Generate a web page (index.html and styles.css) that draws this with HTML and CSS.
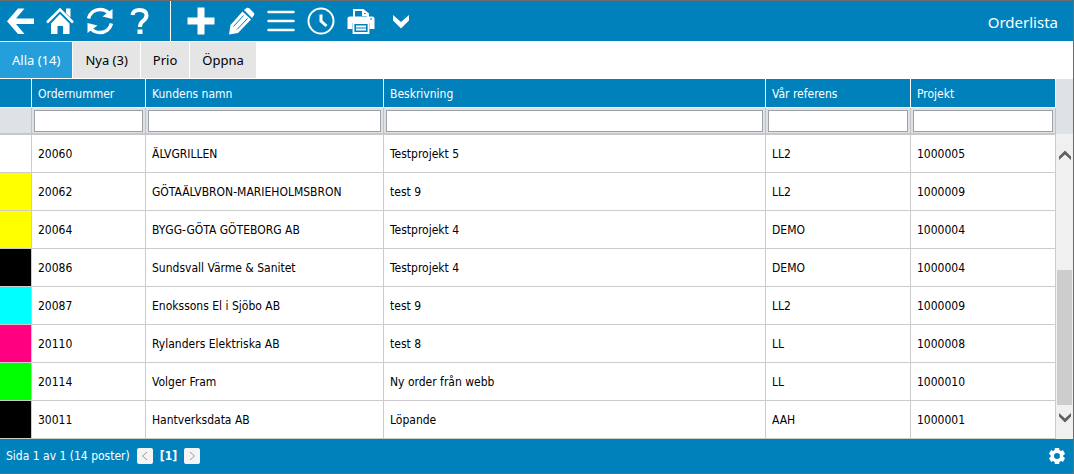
FILE: index.html
```html
<!DOCTYPE html>
<html lang="sv">
<head>
<meta charset="utf-8">
<title>Orderlista</title>
<link rel="stylesheet" href="styles.css">
</head>
<body>
<div class="app">
  <header class="toolbar">
    <nav class="group nav-group" aria-label="Navigering">
      <button class="tool" aria-label="Tillbaka"><svg viewBox="0 0 30 30"><path class="solid" d="M13 2.500h6.500L11 12.500H29v5.500H11L19.500 28H13L2 15.300z"/></svg></button>
      <button class="tool" aria-label="Hem"><svg viewBox="0 0 30 30"><path d="M2 16.500 15 3.500 28 16.500" stroke-width="2.500"/><path class="solid" d="M21 2.500h4.500v9L21 7zM15 8l9.500 9.500V28H18v-8h-5.500v8H6V17.500z"/></svg></button>
      <button class="tool" aria-label="Uppdatera"><svg viewBox="0 0 30 30"><path d="M3.500 12.500C5 7 9.500 3.500 15 3.500c4 0 7 1.500 9 4M26.500 17.500C25 23 20.500 26.500 15 26.500c-4 0-7-1.500-9-4" stroke-width="3.500"/><path class="solid" d="M27.500 3v10l-10-2.500zM2.500 27V17l10 2.500z"/></svg></button>
      <button class="tool" aria-label="Hjälp"><svg viewBox="0 0 30 30"><path d="M7.500 9c.5-3.500 3-5 7-5 4.500 0 7 2 7 5.500 0 3-1.500 4-3.500 5.500-2.500 1.800-3 3-3 6" stroke-width="4"/><path class="solid" d="M12.500 23.500h5V28h-5z"/></svg></button>
    </nav>
    <div class="group" role="toolbar" aria-label="Orderverktyg">
      <button class="tool" aria-label="Ny"><svg viewBox="0 0 30 30"><path d="M15 1.500v27M1.500 15h27" stroke-width="7"/></svg></button>
      <button class="tool" aria-label="Redigera"><svg viewBox="0 0 30 30"><path class="solid" d="m16.500 5.500 8.500 8-13 13.500-9 1.500 1.500-9.500z"/><path class="cut" d="M7.500 20.500 17.500 9.500M11 23.500 21.500 12.500"/><path class="solid" d="m18 4 2.500-2c1-.6 2-.4 3 .5l4 4c1 1 1 2 .3 3L26 12z"/></svg></button>
      <button class="tool" aria-label="Lista"><svg viewBox="0 0 30 30"><path d="M2.500 6h25M2.500 15h25M2.500 24h25" stroke-width="2.500" stroke-linecap="round"/></svg></button>
      <button class="tool" aria-label="Tid"><svg viewBox="0 0 30 30"><circle cx="15" cy="15" r="12.500" stroke-width="2"/><path d="M15 8.500V15l5.500 5" stroke-width="3"/></svg></button>
      <button class="tool" aria-label="Skriv ut"><svg viewBox="0 0 30 30"><path class="solid" d="M1.500 12.500Q1.500 10.500 4 10.500H26Q28.500 10.500 28.500 12.500V23H23.500V17H6.500v6H1.500z"/><path d="M8 11V4h9l5 4v4H8M17 4v5h5" stroke-width="2"/><path class="cut" d="M24 13h2"/><path d="M7.500 17h15v10h-15zM10 20.500h10M10 23.500h10" stroke-width="1.800"/></svg></button>
      <button class="tool" aria-label="Mer"><svg viewBox="0 0 30 30"><path class="solid" d="m7 9 8 7 8-7v5.500L15 22.500l-8-8z"/></svg></button>
    </div>
    <h1 class="title">Orderlista</h1>
  </header>

  <div class="tabs" role="tablist">
    <button class="tab active" role="tab" aria-selected="true">Alla (14)</button>
    <button class="tab" role="tab" aria-selected="false">Nya (3)</button>
    <button class="tab" role="tab" aria-selected="false">Prio</button>
    <button class="tab" role="tab" aria-selected="false">Öppna</button>
  </div>

  <main class="grid">
    <table class="orders">
      <colgroup><col class="c-mark"><col class="c-number"><col class="c-customer"><col><col class="c-ref"><col class="c-ref"></colgroup>
      <thead>
        <tr class="heads"><th></th><th id="h1">Ordernummer</th><th id="h2">Kundens namn</th><th id="h3">Beskrivning</th><th id="h4">Vår referens</th><th id="h5">Projekt</th></tr>
        <tr class="filters"><td></td><td><input type="text" aria-labelledby="h1"></td><td><input type="text" aria-labelledby="h2"></td><td><input type="text" aria-labelledby="h3"></td><td><input type="text" aria-labelledby="h4"></td><td><input type="text" aria-labelledby="h5"></td></tr>
      </thead>
      <tbody>
        <tr><td></td><td>20060</td><td>ÄLVGRILLEN</td><td>Testprojekt 5</td><td>LL2</td><td>1000005</td></tr>
        <tr><td class="yellow"></td><td>20062</td><td>GÖTAÄLVBRON-MARIEHOLMSBRON</td><td>test 9</td><td>LL2</td><td>1000009</td></tr>
        <tr><td class="yellow"></td><td>20064</td><td>BYGG-GÖTA GÖTEBORG AB</td><td>Testprojekt 4</td><td>DEMO</td><td>1000004</td></tr>
        <tr><td class="black"></td><td>20086</td><td>Sundsvall Värme &amp; Sanitet</td><td>Testprojekt 4</td><td>DEMO</td><td>1000004</td></tr>
        <tr><td class="cyan"></td><td>20087</td><td>Enokssons El i Sjöbo AB</td><td>test 9</td><td>LL2</td><td>1000009</td></tr>
        <tr><td class="pink"></td><td>20110</td><td>Rylanders Elektriska AB</td><td>test 8</td><td>LL</td><td>1000008</td></tr>
        <tr><td class="green"></td><td>20114</td><td>Volger Fram</td><td>Ny order från webb</td><td>LL</td><td>1000010</td></tr>
        <tr><td class="black"></td><td>30011</td><td>Hantverksdata AB</td><td>Löpande</td><td>AAH</td><td>1000001</td></tr>
      </tbody>
    </table>
    <div class="scroll">
      <div class="scroll-head"></div>
      <button class="arrow up" aria-label="Rulla upp"><svg viewBox="0 0 12 10"><path d="M0 6.500 6 .5l6 6V10L6 4.500 0 10z"/></svg></button>
      <div class="track"><div class="thumb"></div></div>
      <button class="arrow down" aria-label="Rulla ner"><svg viewBox="0 0 12 10"><path d="M0 0l6 5.500L12 0v3.500l-6 6-6-6z"/></svg></button>
    </div>
  </main>

  <footer class="pager">
    <span>Sida 1 av 1 (14 poster)</span>
    <button class="step" aria-label="Föregående sida"><svg viewBox="0 0 16 16"><path d="M10 4 5.500 8l4.500 4"/></svg></button>
    <strong class="page">[1]</strong>
    <button class="step" aria-label="Nästa sida"><svg viewBox="0 0 16 16"><path d="m6 4 4.500 4L6 12"/></svg></button>
    <button class="settings" aria-label="Inställningar"><svg viewBox="0 0 16 16"><circle cx="8" cy="8" r="4.700" stroke-width="3.400"/><path d="M8 0v3M8 13v3M1 4l2.600 1.500M12.400 10.500 15 12M1 12l2.600-1.500M12.400 5.500 15 4" stroke-width="4.500"/></svg></button>
  </footer>
</div>
</body>
</html>
```
FILE: styles.css
```css
* { box-sizing: border-box; }
body { margin: 0; background: #fff; color: #000; font: 12px/16px "DejaVu Sans Condensed", Tahoma, sans-serif; }
button { margin: 0; padding: 0; border: 0; background: none; color: inherit; font: inherit; }
svg { display: block; }

.app { display: flex; flex-direction: column; min-height: 100vh; border: solid #6b6b6b; border-width: 1px 1px 1px 0; }

.toolbar { display: flex; align-items: stretch; height: 40px; background: #0081bc; color: #fff; }
.group { display: flex; align-items: center; gap: 10px; padding-left: 15px; }
.nav-group { padding: 0 15px 0 5px; border-right: 1px solid #fff; }
.tool svg { width: 30px; height: 30px; fill: none; stroke: #fff; }
.tool .solid { fill: #fff; stroke: none; }
.tool .cut { stroke: #0081bc; stroke-width: 1; }
.title { margin: auto 15px auto auto; padding-top: 2px; font: 15px/20px "Noto Sans", sans-serif; }

.tabs { display: flex; gap: 1px; padding: 1px 0; }
.tab { height: 36px; padding: 0 12px; background: #e5e5e5; font: 13px/20px "Noto Sans", sans-serif; }
.tab.active { background: #259fdb; color: #fff; }

.grid { display: flex; }
.orders { flex: 1; table-layout: fixed; border-collapse: separate; border-spacing: 0; }
.c-mark { width: 32px; }
.c-number { width: 114px; }
.c-customer { width: 238px; }
.c-ref { width: 145px; }
.orders th, .orders td { padding: 0 6px; border: solid #ccc; border-width: 0 1px 1px 0; text-align: left; font-weight: normal; white-space: nowrap; overflow: hidden; }
.orders .heads th { height: 29px; padding-top: 2px; background: #0081bc; border-color: #fff; color: #fff; }
.orders .filters td { height: 27px; padding: 2px 2px 1px; background: #dee1e6; border-color: #c0c2c6; border-bottom: 2px solid #c8c8c8; }
.filters input { display: block; width: 100%; height: 22px; padding: 0 4px; border: 1px solid #9da0a4; background: #fff; font: inherit; }
.orders tbody td { height: 38px; }
.orders .yellow { background: #ff0; }
.orders .black { background: #000; }
.orders .cyan { background: #0ff; }
.orders .pink { background: #ff0080; }
.orders .green { background: #0f0; }

.scroll { display: flex; flex-direction: column; width: 17px; background: #f0f0f0; }
.scroll-head { height: 55px; background: #dee1e6; }
.arrow { display: flex; align-items: center; justify-content: center; height: 42px; }
.arrow.down { height: 34px; padding-bottom: 9px; }
.arrow svg { width: 12px; height: 10px; fill: #606060; }
.track { display: flex; flex: 1; align-items: flex-end; padding: 0 1px; }
.thumb { width: 100%; height: 59%; background: #cdcdcd; }

.pager { display: flex; flex: 1; align-items: center; gap: 7px; padding: 0 8px 0 6px; background: #0081bc; color: #fff; }
.step { width: 16px; height: 16px; border-radius: 2px; background: #f4f4f4; }
.step svg { width: 16px; height: 16px; fill: none; stroke: #999; }
.settings { margin-left: auto; }
.settings svg { width: 16px; height: 16px; fill: none; stroke: #fff; }
```
